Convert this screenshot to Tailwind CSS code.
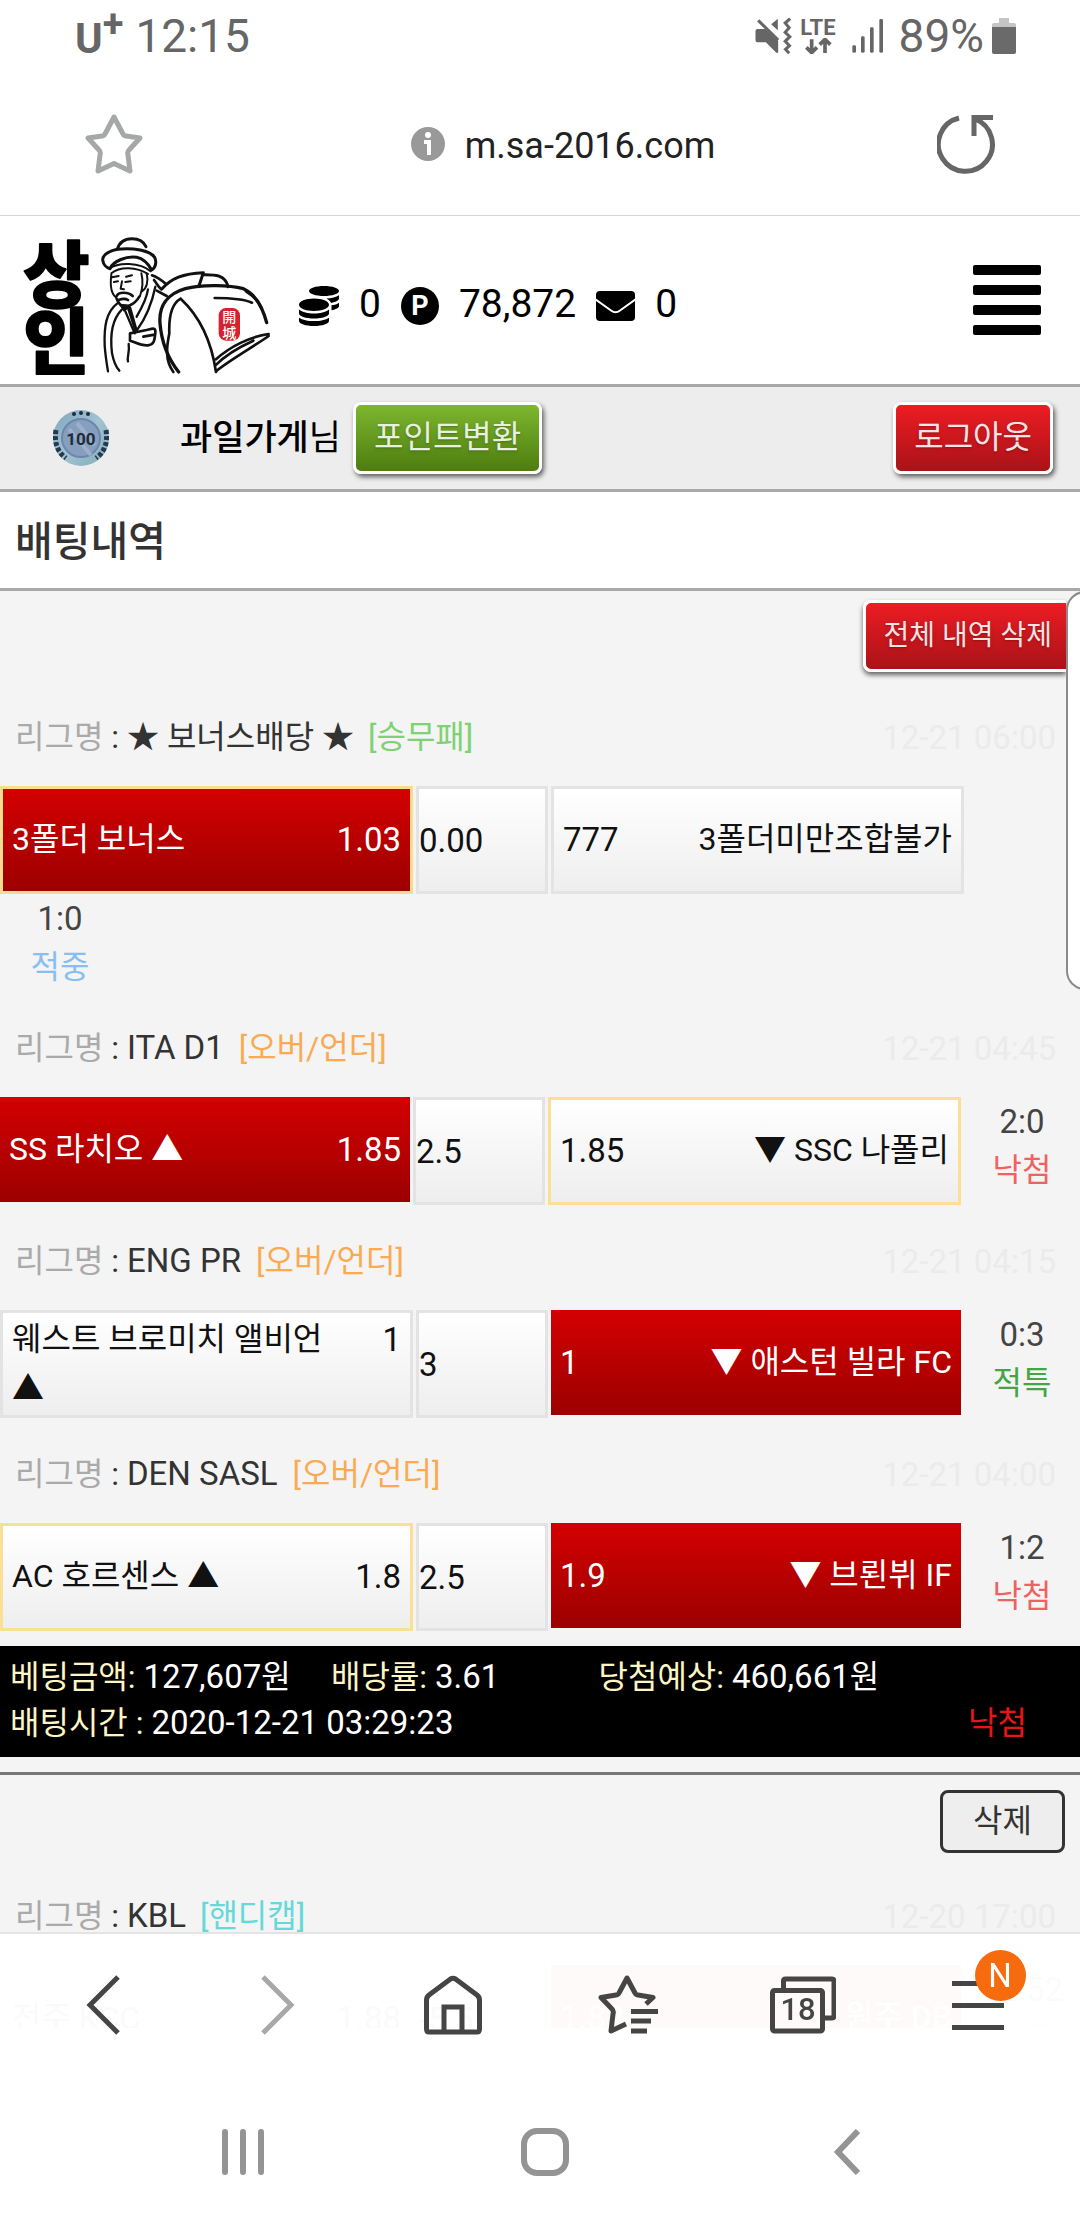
<!DOCTYPE html>
<html lang="ko">
<head>
<meta charset="utf-8">
<meta name="viewport" content="width=device-width, initial-scale=1">
<title>배팅내역</title>
<script src="https://cdn.jsdelivr.net/npm/@tailwindcss/browser@4"></script>
</head>
<body class="h-screen overflow-hidden bg-[#f4f4f4] font-[Roboto,'Noto_Sans_CJK_KR',sans-serif] text-[32px] leading-[49px] text-[#111]">

<!-- phone status bar -->
<div class="flex h-18 items-center justify-between bg-white pr-16 pl-[75px] text-[46px] text-[#666]">
  <div class="flex items-center gap-3">
    <span class="flex items-center font-bold"><span class="pt-1 text-[42px]">U</span><span class="pb-6 text-[38px]">+</span></span>
    <span>12:15</span>
  </div>
  <div class="flex items-center">
    <svg class="h-[38px] w-[37px]" viewBox="170 48 110 114" fill="#666"><path d="M177 84H200L239 119V154Q237 158 232 154L202 124H177Q171 124 171 118V90Q171 84 177 84Z"/><path d="M179 58L239 117" stroke="#666" stroke-width="9"/><path d="M218 70L238 53V88Z"/><path d="M275 53L260 66L272 80L260 94L274 107L260 121L273 134L261 145L272 157" fill="none" stroke="#666" stroke-width="9"/></svg>
    <div class="ml-2 flex flex-col items-center">
      <span class="text-[22px] leading-[20px] font-bold">LTE</span>
      <svg class="h-4 w-7" viewBox="325 114 80 48" fill="none" stroke="#666" stroke-width="11"><path d="M346 118V158M330 142L346 158L362 142M386 159V120M370 134L386 118L402 134"/></svg>
    </div>
    <svg class="ml-4 h-[34px] w-[31px]" viewBox="460 57 93 102" fill="#666"><rect x="461" y="136" width="11" height="22" rx="4"/><rect x="487" y="109" width="11" height="49" rx="4"/><rect x="514" y="82" width="11" height="76" rx="4"/><rect x="542" y="57" width="11" height="101" rx="4"/></svg>
    <span class="ml-4">89%</span>
    <svg class="ml-2 h-9 w-6" viewBox="0 0 24 36"><path d="M7 0H17V5H22Q24 5 24 7V10H0V7Q0 5 2 5H7Z" fill="#c4c4c4"/><path d="M0 9H24V34Q24 36 22 36H2Q0 36 0 34Z" fill="#6a6a6a"/></svg>
  </div>
</div>

<!-- address bar -->
<div class="flex h-36 items-center justify-between border-b border-[#d6d6d6] bg-white px-[85px]">
  <button type="button" aria-label="북마크"><svg class="h-[60px] w-[58px]" viewBox="0 0 58 60" fill="none" stroke="#a5a8a7" stroke-width="5" stroke-linejoin="round"><path d="M29 3L38 20Q39 22 41 22L55 24L44 36Q42 38 43 41L45 57L30 50Q29 49 28 50L13 57L15 41Q16 38 14 36L3 24L17 22Q19 22 20 20Z"/></svg></button>
  <div class="flex items-center gap-5 pl-[46px] text-[36px] text-[#222]">
    <svg class="h-[34px] w-[34px]" viewBox="0 0 34 34"><circle cx="17" cy="17" r="17" fill="#999"/><circle cx="17" cy="8" r="3" fill="#fff"/><path d="M13 13H20V28H16V17H13Z" fill="#fff"/></svg>
    <span class="pt-[5px]">m.sa-2016.com</span>
  </div>
  <button type="button" aria-label="새로고침"><svg class="h-[60px] w-[58px]" viewBox="0 0 58 60" fill="none" stroke="#666" stroke-width="5"><path d="M22 4A27 27 0 1 0 38 5"/><path d="M37 22V3.500H56"/></svg></button>
</div>

<!-- site header -->
<header class="flex h-[171px] items-center border-b-3 border-[#a9a9a9] bg-white pt-2 text-[39px] text-black">
  <a href="#" aria-label="상인" class="mr-[9px] self-start">
    <svg class="h-[160px] w-[290px] overflow-visible" viewBox="0 12 870 480" fill="none" stroke="#111" stroke-linecap="round" stroke-linejoin="round">
      <g class="font-['Noto_Sans_CJK_KR'] font-black" fill="#000" stroke="#000" stroke-width="5">
        <text x="70" y="242" font-size="216">상</text>
        <text x="70" y="445" font-size="216">인</text>
      </g>
      <!-- hat -->
      <path d="M352 88C358 66 376 56 396 56C416 56 432 66 438 80" stroke-width="9"/>
      <path d="M352 88C330 93 308 102 308 120C310 134 320 144 330 146C340 122 380 108 410 112C430 116 446 134 455 150C468 142 470 124 464 112C450 92 400 82 352 88Z" stroke-width="9"/>
      <path d="M328 146C354 126 420 126 452 154M334 160C360 138 410 140 444 162" stroke-width="6"/>
      <!-- face -->
      <path d="M334 164C330 196 334 222 348 232M424 160C430 184 428 206 420 228M440 160C446 184 440 206 426 214M336 172L356 168M378 170L396 166M342 186L354 184M376 186L392 184M366 184L362 206L372 208" stroke-width="6"/>
      <path d="M350 228C356 214 386 216 398 228M356 240C366 236 378 236 384 240M350 236C356 252 368 262 376 268L390 256C404 250 412 240 418 230" stroke-width="8"/>
      <path d="M362 254L372 274L388 256Z" fill="#111" stroke-width="3"/>
      <!-- body -->
      <path d="M352 250C318 276 312 320 314 376C316 406 320 430 324 454M366 268C334 300 330 350 336 400C342 430 350 444 358 452M376 274L404 340M390 262L410 332M466 200C456 250 440 290 410 332M444 208C440 236 426 262 410 290M386 372C390 400 380 410 384 424" stroke-width="7"/>
      <path d="M390 340L440 330C456 326 468 320 466 338C464 362 462 374 444 376C424 378 404 366 390 362ZM430 350L464 344M384 262L408 336" stroke-width="8"/>
      <path d="M456 166C474 172 486 182 498 192M462 180C470 190 476 202 484 208M470 212L500 228" stroke-width="8"/>
      <!-- pack -->
      <path d="M486 206C514 176 548 160 610 158L596 200M610 164C640 164 676 162 684 200" stroke-width="9"/>
      <path d="M536 456C500 410 484 360 480 310C476 260 500 222 556 206C610 192 690 196 730 206C770 224 790 270 800 308" stroke-width="10"/>
      <path d="M520 456C494 420 500 380 508 340C506 290 514 252 542 236M542 236C600 290 634 360 648 456M644 234C690 234 730 236 756 248M738 214C764 230 780 252 786 268" stroke-width="8"/>
      <path d="M648 418C690 380 750 350 806 342M650 452C690 420 760 380 806 348M646 436C680 402 720 380 760 362" stroke-width="8"/>
      <rect x="656" y="264" width="64" height="98" rx="22" fill="#d8202e" stroke="none"/>
      <g class="font-['Noto_Sans_CJK_KR'] font-medium" fill="#fff" stroke="none" text-anchor="middle" font-size="42"><text x="688" y="306">開</text><text x="688" y="353">城</text></g>
    </svg>
  </a>
  <div class="flex items-center gap-5">
    <svg class="mt-1 h-10 w-10" viewBox="0 0 512 512"><path d="M0 405.300V448c0 35.300 86 64 192 64s192-28.700 192-64v-42.700C342.700 434.400 267.200 448 192 448S41.300 434.400 0 405.300zM320 128c106 0 192-28.700 192-64S426 0 320 0 128 28.700 128 64s86 64 192 64zM0 300.400V352c0 35.300 86 64 192 64s192-28.700 192-64v-51.600c-41.300 34-116.900 51.600-192 51.600S41.300 334.400 0 300.400zm416 11c57.300-11.100 96-31.700 96-55.400v-42.700c-23.200 16.400-57.300 27.600-96 34.500v63.600zM192 160C86 160 0 195.800 0 240s86 80 192 80 192-35.800 192-80-86-80-192-80zm219.300 56.300c60-10.800 100.700-32 100.700-56.300v-42.700c-35.500 25.100-96.500 38.600-160.700 41.800 29.500 14.300 51.200 33.500 60 57.200z"/></svg>
    <span>0</span>
    <span class="mt-1 flex h-[38px] w-[38px] items-center justify-center rounded-full bg-black text-[27px] font-bold text-white">P</span>
    <span>78,872</span>
    <svg class="mt-1 h-[30px] w-[39px]" viewBox="0 0 39 30"><rect width="39" height="30" rx="4"/><path d="M-1 8L15 19.500Q19.500 23 24 19.500L40 8" fill="none" stroke="#fff" stroke-width="2"/></svg>
    <span>0</span>
  </div>
  <button type="button" aria-label="메뉴" class="mr-[39px] mb-2 ml-auto flex w-[68px] flex-col gap-[10px]">
    <span class="h-[10px] w-full rounded-xs bg-black"></span><span class="h-[10px] w-full rounded-xs bg-black"></span><span class="h-[10px] w-full rounded-xs bg-black"></span><span class="h-[10px] w-full rounded-xs bg-black"></span>
  </button>
</header>

<!-- account bar -->
<div class="flex h-[105px] items-center border-b-3 border-[#a9a9a9] bg-[#ededed] pr-[27px] pl-[53px]">
  <svg class="h-[58px] w-14" viewBox="0 0 56 58">
    <defs><linearGradient id="lv" x1="0" y1="0" x2="1" y2="1"><stop offset="0" stop-color="#7fa6bb"/><stop offset=".5" stop-color="#a3c2d3"/><stop offset="1" stop-color="#7eaeb4"/></linearGradient></defs>
    <circle cx="28" cy="29" r="28" fill="url(#lv)"/><circle cx="28" cy="29" r="19" fill="#879fbe" stroke="#6b87ae" stroke-width="2"/><path d="M16 20L38 46M24 14L42 36" stroke="#9bb0cb" stroke-width="4"/>
    <g fill="#1d2c42"><circle cx="21" cy="5" r="2"/><circle cx="28" cy="4" r="2"/><circle cx="35" cy="5" r="2"/></g>
    <path d="M3 21Q0 40 13 49M53 21Q56 40 43 49" fill="none" stroke="#26384f" stroke-width="5" stroke-dasharray="4 2"/>
    <text x="28" y="36" text-anchor="middle" font-size="17" class="font-[Roboto] font-bold" fill="#222b3a">100</text>
  </svg>
  <span class="ml-[71px] text-[35px] text-black"><b class="font-medium">과일가게</b>님</span>
  <button type="button" class="ml-3 h-18 rounded-lg border-3 border-white bg-linear-to-b from-[#7db72f] to-[#4e7d0e] px-[18px] pb-[2px] text-[#e8f0de] shadow-[2px_3px_5px_rgba(0,0,0,0.6)] text-shadow-md">포인트변환</button>
  <button type="button" class="ml-auto h-18 rounded-lg border-3 border-white bg-linear-to-b from-[#ed1c24] to-[#aa1317] px-[18px] pb-[2px] text-[#fae3e5] shadow-[2px_3px_5px_rgba(0,0,0,0.6)] text-shadow-md">로그아웃</button>
</div>

<h1 class="border-b-3 border-[#a9a9a9] bg-white pt-[26px] pb-[22px] pl-[15px] text-[41px] leading-[48px] font-medium text-[#333]">배팅내역</h1>

<main class="relative">
  <div class="absolute top-0 -right-6 h-[399px] w-[38px] rounded-[20px] border-2 border-[#8a8a8a] bg-white"></div>

  <div class="flex h-[90px] justify-end pt-[9px]">
    <button type="button" class="mr-[14px] h-18 rounded-l-lg border-y-3 border-l-3 border-white bg-linear-to-b from-[#ed1c24] to-[#aa1317] pr-[14px] pb-[2px] pl-[18px] text-[28px] text-[#fae3e5] shadow-[0_3px_5px_rgba(0,0,0,0.6)] text-shadow-md">전체 내역 삭제</button>
  </div>

  <section>
    <h2 class="flex justify-between pt-8 pr-6 pb-6 pl-[15px] text-[#333]"><span><span class="text-[#aaa]">리그명</span> : ★ 보너스배당 ★ <span class="ml-[6px] text-[#7ed273]">[승무패]</span></span><time class="text-[33px] text-[#ebebeb]">12-21 06:00</time></h2>
    <div class="flex flex-wrap items-start gap-x-[3px]">
      <div class="flex h-[108px] w-[413px] items-center border-3 border-[#fbdb8e] bg-linear-to-b from-[#d40000] to-[#9c0000] px-[9px] pb-[2px] text-white"><span>3폴더 보너스</span><span class="ml-auto text-[33px]">1.03</span></div>
      <div class="flex h-[108px] w-[132px] items-center border-3 border-[#e3e3e3] bg-linear-to-b from-white to-[#eee] text-[33px]">0.00</div>
      <div class="flex h-[108px] w-[413px] items-center border-3 border-[#e3e3e3] bg-linear-to-b from-white to-[#eee] px-[9px] pb-[2px]"><span class="text-[33px]">777</span><span class="ml-auto">3폴더미만조합불가</span></div>
      <div class="w-[120px] text-center text-[#444]"><p class="text-[33px]">1:0</p><p class="text-[#87bff3]">적중</p></div>
    </div>
  </section>

  <section>
    <h2 class="flex justify-between pt-8 pr-6 pb-6 pl-[15px] text-[#333]"><span><span class="text-[#aaa]">리그명</span> : <span class="text-[33px] leading-none">ITA D1</span> <span class="ml-[7px] text-[#f9ab54]">[오버/언더]</span></span><time class="text-[33px] text-[#ebebeb]">12-21 04:45</time></h2>
    <div class="flex h-[108px] items-start gap-x-[3px]">
      <div class="flex h-[105px] w-[410px] items-center bg-linear-to-b from-[#d40000] to-[#9c0000] px-[9px] text-white"><span>SS 라치오 ▲</span><span class="ml-auto text-[33px]">1.85</span></div>
      <div class="flex h-[108px] w-[132px] items-center border-3 border-[#e3e3e3] bg-linear-to-b from-white to-[#eee] text-[33px]">2.5</div>
      <div class="flex h-[108px] w-[413px] items-center border-3 border-[#fadf94] bg-linear-to-b from-white to-[#eee] px-[9px] pb-[2px]"><span class="text-[33px]">1.85</span><span class="ml-auto">▼ SSC 나폴리</span></div>
      <div class="flex-1 text-center text-[#444]"><p class="text-[33px]">2:0</p><p class="text-[#f06262]">낙첨</p></div>
    </div>
  </section>

  <section>
    <h2 class="flex justify-between pt-8 pr-6 pb-6 pl-[15px] text-[#333]"><span><span class="text-[#aaa]">리그명</span> : <span class="text-[33px] leading-none">ENG PR</span> <span class="ml-[7px] text-[#f9ab54]">[오버/언더]</span></span><time class="text-[33px] text-[#ebebeb]">12-21 04:15</time></h2>
    <div class="flex h-[108px] items-start gap-x-[3px]">
      <div class="flex h-[108px] w-[413px] items-start border-3 border-[#e3e3e3] bg-linear-to-b from-white to-[#eee] px-[9px] pt-[2px]"><span class="w-[85%]">웨스트 브로미치 앨비언 ▲</span><span class="ml-auto text-[33px]">1</span></div>
      <div class="flex h-[108px] w-[132px] items-center border-3 border-[#e3e3e3] bg-linear-to-b from-white to-[#eee] text-[33px]">3</div>
      <div class="flex h-[105px] w-[410px] items-center bg-linear-to-b from-[#d40000] to-[#9c0000] px-[9px] text-white"><span class="text-[33px]">1</span><span class="ml-auto">▼ 애스턴 빌라 FC</span></div>
      <div class="flex-1 text-center text-[#444]"><p class="text-[33px]">0:3</p><p class="text-[#44a544]">적특</p></div>
    </div>
  </section>

  <section>
    <h2 class="flex justify-between pt-8 pr-6 pb-6 pl-[15px] text-[#333]"><span><span class="text-[#aaa]">리그명</span> : <span class="text-[33px] leading-none">DEN SASL</span> <span class="ml-[7px] text-[#f9ab54]">[오버/언더]</span></span><time class="text-[33px] text-[#ebebeb]">12-21 04:00</time></h2>
    <div class="flex h-[108px] items-start gap-x-[3px]">
      <div class="flex h-[108px] w-[413px] items-center border-3 border-[#fadf94] bg-linear-to-b from-white to-[#eee] px-[9px] pb-[2px]"><span>AC 호르센스 ▲</span><span class="ml-auto text-[33px]">1.8</span></div>
      <div class="flex h-[108px] w-[132px] items-center border-3 border-[#e3e3e3] bg-linear-to-b from-white to-[#eee] text-[33px]">2.5</div>
      <div class="flex h-[105px] w-[410px] items-center bg-linear-to-b from-[#d40000] to-[#9c0000] px-[9px] text-white"><span class="text-[33px]">1.9</span><span class="ml-auto">▼ 브뢴뷔 IF</span></div>
      <div class="flex-1 text-center text-[#444]"><p class="text-[33px]">1:2</p><p class="text-[#f06262]">낙첨</p></div>
    </div>
  </section>

  <!-- slip totals -->
  <div class="mt-[15px] bg-black pt-2 pb-[11px] pl-[10px] leading-[46px] text-white">
    <div class="grid grid-cols-[30%_25%_1fr]">
      <p><span class="text-[#fbf6c4]">베팅금액:</span> <span class="text-[33px] leading-none">127,607</span>원</p>
      <p><span class="text-[#fbf6c4]">배당률:</span> <span class="text-[33px] leading-none">3.61</span></p>
      <p><span class="text-[#fbf6c4]">당첨예상:</span> <span class="text-[33px] leading-none">460,661</span>원</p>
    </div>
    <div class="flex justify-between pr-[53px]">
      <p><span class="text-[#fbf6c4]">배팅시간 :</span> <span class="text-[33px] leading-none">2020-12-21 03:29:23</span></p>
      <p class="text-[#e81515]">낙첨</p>
    </div>
  </div>

  <div class="mt-[15px] flex h-[88px] justify-end border-t-3 border-[#777] pt-[15px] pr-[15px]">
    <button type="button" class="h-[63px] w-[125px] rounded-lg border-3 border-[#333] bg-[#eee] text-[#333]">삭제</button>
  </div>

  <section>
    <h2 class="flex justify-between pt-8 pr-6 pb-6 pl-[15px] text-[#333]"><span><span class="text-[#aaa]">리그명</span> : <span class="text-[33px] leading-none">KBL</span> <span class="ml-[6px] text-[#65d9d9]">[핸디캡]</span></span><time class="text-[33px] text-[#ebebeb]">12-20 17:00</time></h2>
    <div class="flex h-[63px] items-start gap-x-[3px] overflow-hidden">
      <div class="flex h-[108px] w-[413px] shrink-0 items-center border-3 border-[#fadf94] bg-linear-to-b from-white to-[#eee] px-[9px] pb-[2px]"><span>전주 KCC</span><span class="ml-auto text-[33px]">1.88</span></div>
      <div class="flex h-[108px] w-[132px] shrink-0 items-center border-3 border-[#e3e3e3] bg-linear-to-b from-white to-[#eee] text-[33px]">-5.5</div>
      <div class="flex h-[105px] w-[410px] shrink-0 items-center bg-linear-to-b from-[#d40000] to-[#9c0000] px-[9px] text-white"><span class="text-[33px]">1.82</span><span class="ml-auto">원주 DB</span></div>
      <div class="flex-1 text-center text-[#444]"><p class="text-[33px]">92:52</p><p class="text-[#87bff3]">적중</p></div>
    </div>
  </section>
</main>

<!-- browser toolbar and system keys -->
<div class="fixed inset-x-0 bottom-0 h-[288px] border-t-2 border-[#e4e4e4] bg-white/98">
  <nav class="grid h-[142px] grid-cols-6 items-center justify-items-center px-[15px]">
    <button type="button" aria-label="뒤로"><svg class="h-[60px] w-[34px]" viewBox="0 0 34 60" fill="none" stroke="#454545" stroke-width="5"><path d="M32 2L4 30L32 58"/></svg></button>
    <button type="button" aria-label="앞으로"><svg class="h-[60px] w-[34px]" viewBox="0 0 34 60" fill="none" stroke="#a8a8a8" stroke-width="5"><path d="M2 2L30 30L2 58"/></svg></button>
    <button type="button" aria-label="홈"><svg class="h-[60px] w-[60px]" viewBox="0 0 60 60" fill="none" stroke="#454545" stroke-width="5" stroke-linejoin="round"><path d="M3.500 25Q3.500 22 6 20L27.500 4Q30 2.500 32.500 4L54 20Q56.500 22 56.500 25V54Q56.500 57 54 57H6Q3.500 57 3.500 54Z"/><path d="M21 56V32H39V56" stroke-linejoin="miter"/></svg></button>
    <button type="button" aria-label="북마크 목록"><svg class="h-[60px] w-[60px]" viewBox="0 0 60 60" fill="none" stroke="#454545" stroke-width="5" stroke-linejoin="round"><path d="M48 29L55 22.500L40 20Q38 20 37 18L29 3L21 18Q20 20 18 20L3 22.500L14 34Q16 36 15 39L13 56L28 49"/><path d="M33 36.500H60M33 46H53M33 56H49" stroke-linejoin="miter"/></svg></button>
    <button type="button" aria-label="탭" class="relative text-[31px] font-medium text-[#454545]"><svg class="h-[58px] w-[66px]" viewBox="0 0 66 58" fill="none" stroke="#454545" stroke-width="5" stroke-linejoin="round"><rect x="2.500" y="14.500" width="50" height="40.500" rx="2"/><path d="M13.500 14V5Q13.500 3 15.500 3H62Q64 3 64 5V40Q64 42 62 42H53"/></svg><span class="absolute bottom-0 left-[11px]">18</span></button>
    <button type="button" aria-label="메뉴" class="relative flex w-[52px] flex-col gap-[17px]">
      <span class="h-[5px] bg-[#454545]"></span><span class="h-[5px] bg-[#454545]"></span><span class="h-[5px] bg-[#454545]"></span>
      <span class="absolute -top-[31px] -right-[22px] flex h-[51px] w-[51px] items-center justify-center rounded-full bg-[#f56b0d] text-[33px] text-white">N</span>
    </button>
  </nav>
  <nav class="grid h-[144px] grid-cols-3 items-center justify-items-center bg-white pt-2 pr-[82px] pl-[92px]">
    <button type="button" aria-label="최근 앱"><svg class="h-[46px] w-[42px]" viewBox="0 0 42 46" fill="#949494"><rect width="6" height="46" rx="3"/><rect x="18" width="6" height="46" rx="3"/><rect x="36" width="6" height="46" rx="3"/></svg></button>
    <button type="button" aria-label="홈 화면" class="h-12 w-12 rounded-[16px] border-6 border-[#949494]"></button>
    <button type="button" aria-label="이전"><svg class="h-[46px] w-7" viewBox="0 0 28 46" fill="none" stroke="#949494" stroke-width="6"><path d="M25 2L5 23L25 44"/></svg></button>
  </nav>
</div>
</body>
</html>
